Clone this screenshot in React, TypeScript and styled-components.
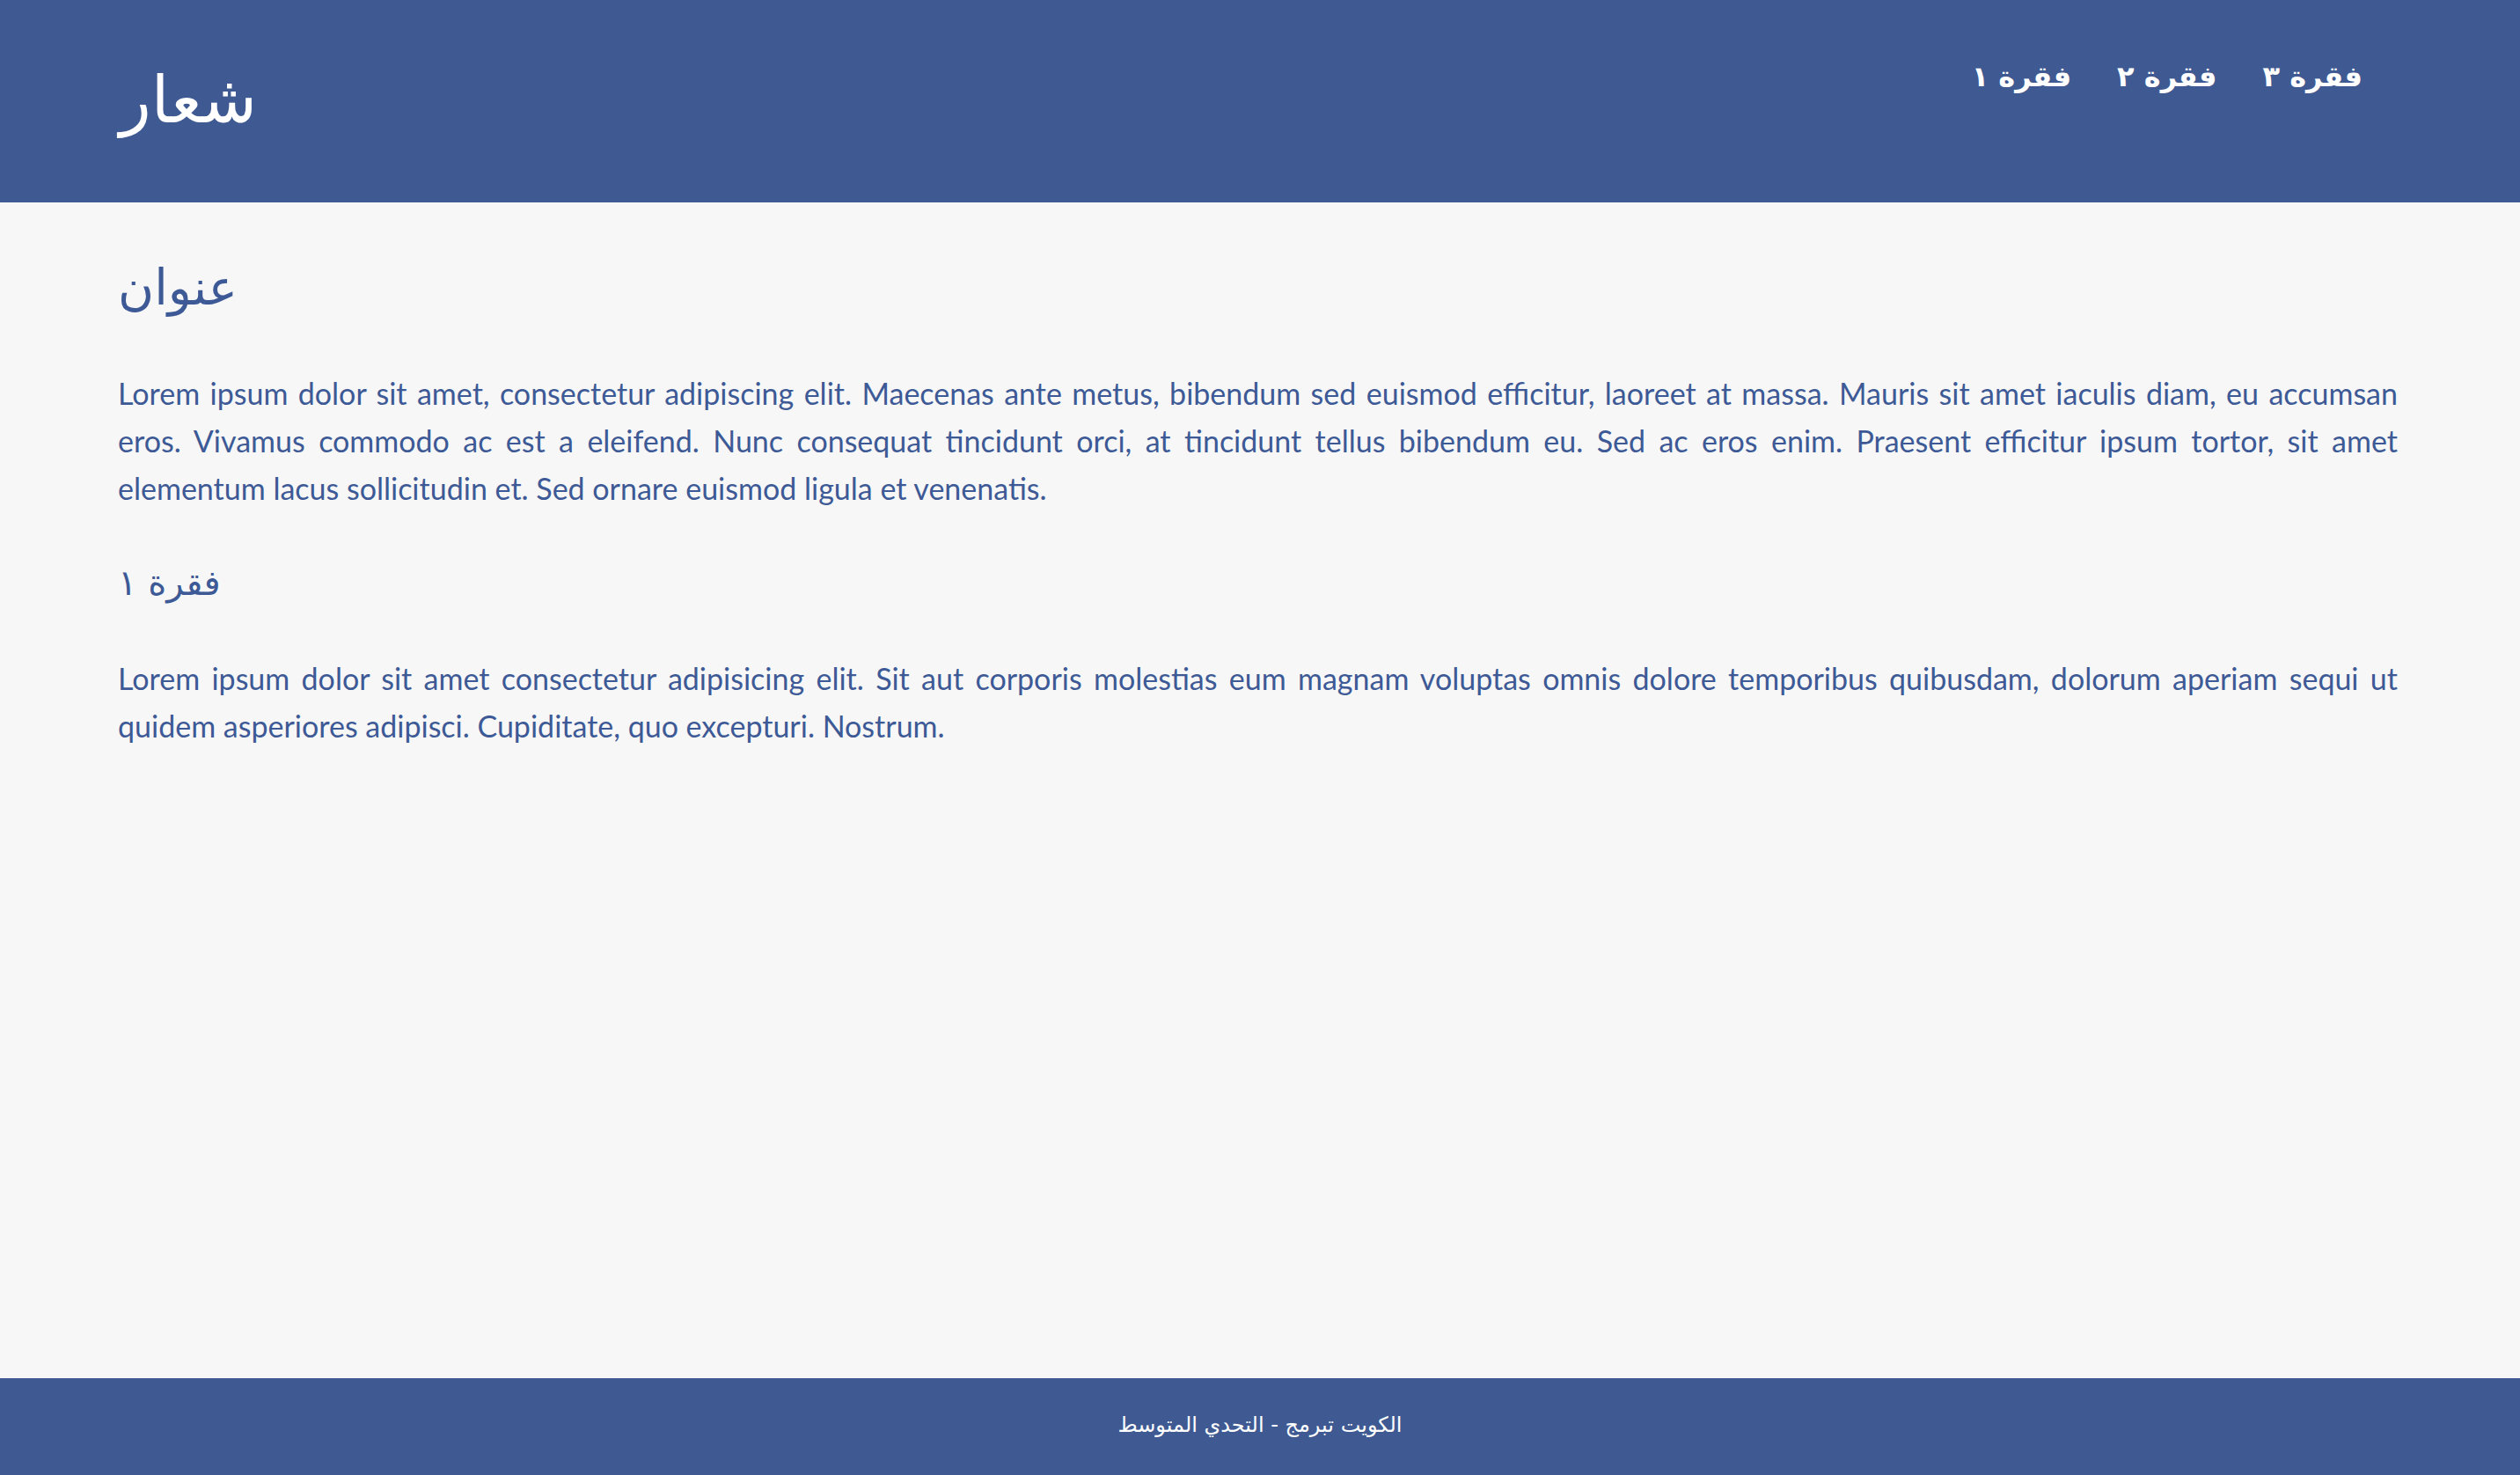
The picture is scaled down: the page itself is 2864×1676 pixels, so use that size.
import React from "react";
import styled, { createGlobalStyle } from "styled-components";

const Global = createGlobalStyle`
  html, body { margin: 0; padding: 0; }
  body {
    background: #f7f7f7;
    font-family: "Lato", "DejaVu Sans", sans-serif;
  }
  * { box-sizing: border-box; }
`;

const Page = styled.div`
  min-height: 100vh;
  display: flex;
  flex-direction: column;
`;

const Header = styled.header`
  height: 230px;
  background: #3f5a92;
  display: flex;
  justify-content: space-between;
  align-items: flex-start;
  padding: 0 179px 0 136px;
`;

const Logo = styled.div`
  color: #ffffff;
  font-family: "DejaVu Sans", sans-serif;
  font-size: 74px;
  line-height: 1;
  padding-top: 76px;
`;

const Nav = styled.nav`
  display: flex;
  gap: 52px;
  padding-top: 68px;
`;

const NavLink = styled.a`
  color: #ffffff;
  text-decoration: none;
  font-family: "DejaVu Sans", sans-serif;
  font-weight: bold;
  font-size: 32px;
  line-height: 1.2;
`;

const Main = styled.main`
  flex: 1;
  padding: 0 139px 0 134px;
  color: #3d5a96;
`;

const Title = styled.h1`
  margin: 61px 0 0;
  font-family: "DejaVu Sans", sans-serif;
  font-weight: normal;
  font-size: 56px;
  line-height: 72px;
`;

const SubTitle = styled.h2`
  margin: 54px 0 0;
  font-family: "DejaVu Sans", sans-serif;
  font-weight: normal;
  font-size: 40px;
  line-height: 53px;
`;

const Para = styled.p<{ $gap: number }>`
  margin: ${(p) => p.$gap}px 0 0;
  font-size: 34px;
  line-height: 54px;
  text-align: justify;
`;

const Footer = styled.footer`
  height: 110px;
  background: #3f5a92;
  color: #ffffff;
  display: flex;
  align-items: center;
  justify-content: center;
  font-family: "DejaVu Sans", sans-serif;
  font-size: 24px;
  padding-bottom: 4px;
`;

export default function App() {
  return (
    <Page>
      <Global />
      <Header>
        <Logo>شعار</Logo>
        <Nav>
          <NavLink href="#">فقرة ١</NavLink>
          <NavLink href="#">فقرة ٢</NavLink>
          <NavLink href="#">فقرة ٣</NavLink>
        </Nav>
      </Header>
      <Main>
        <Title>عنوان</Title>
        <Para $gap={57}>
          Lorem ipsum dolor sit amet, consectetur adipiscing elit. Maecenas ante metus, bibendum sed euismod efficitur, laoreet at massa. Mauris sit amet iaculis diam, eu accumsan eros. Vivamus commodo ac est a eleifend. Nunc consequat tincidunt orci, at tincidunt tellus bibendum eu. Sed ac eros enim. Praesent efficitur ipsum tortor, sit amet elementum lacus sollicitudin et. Sed ornare euismod ligula et venenatis.
        </Para>
        <SubTitle>فقرة ١</SubTitle>
        <Para $gap={55}>
          Lorem ipsum dolor sit amet consectetur adipisicing elit. Sit aut corporis molestias eum magnam voluptas omnis dolore temporibus quibusdam, dolorum aperiam sequi ut quidem asperiores adipisci. Cupiditate, quo excepturi. Nostrum.
        </Para>
      </Main>
      <Footer>الكويت تبرمج - التحدي المتوسط</Footer>
    </Page>
  );
}
